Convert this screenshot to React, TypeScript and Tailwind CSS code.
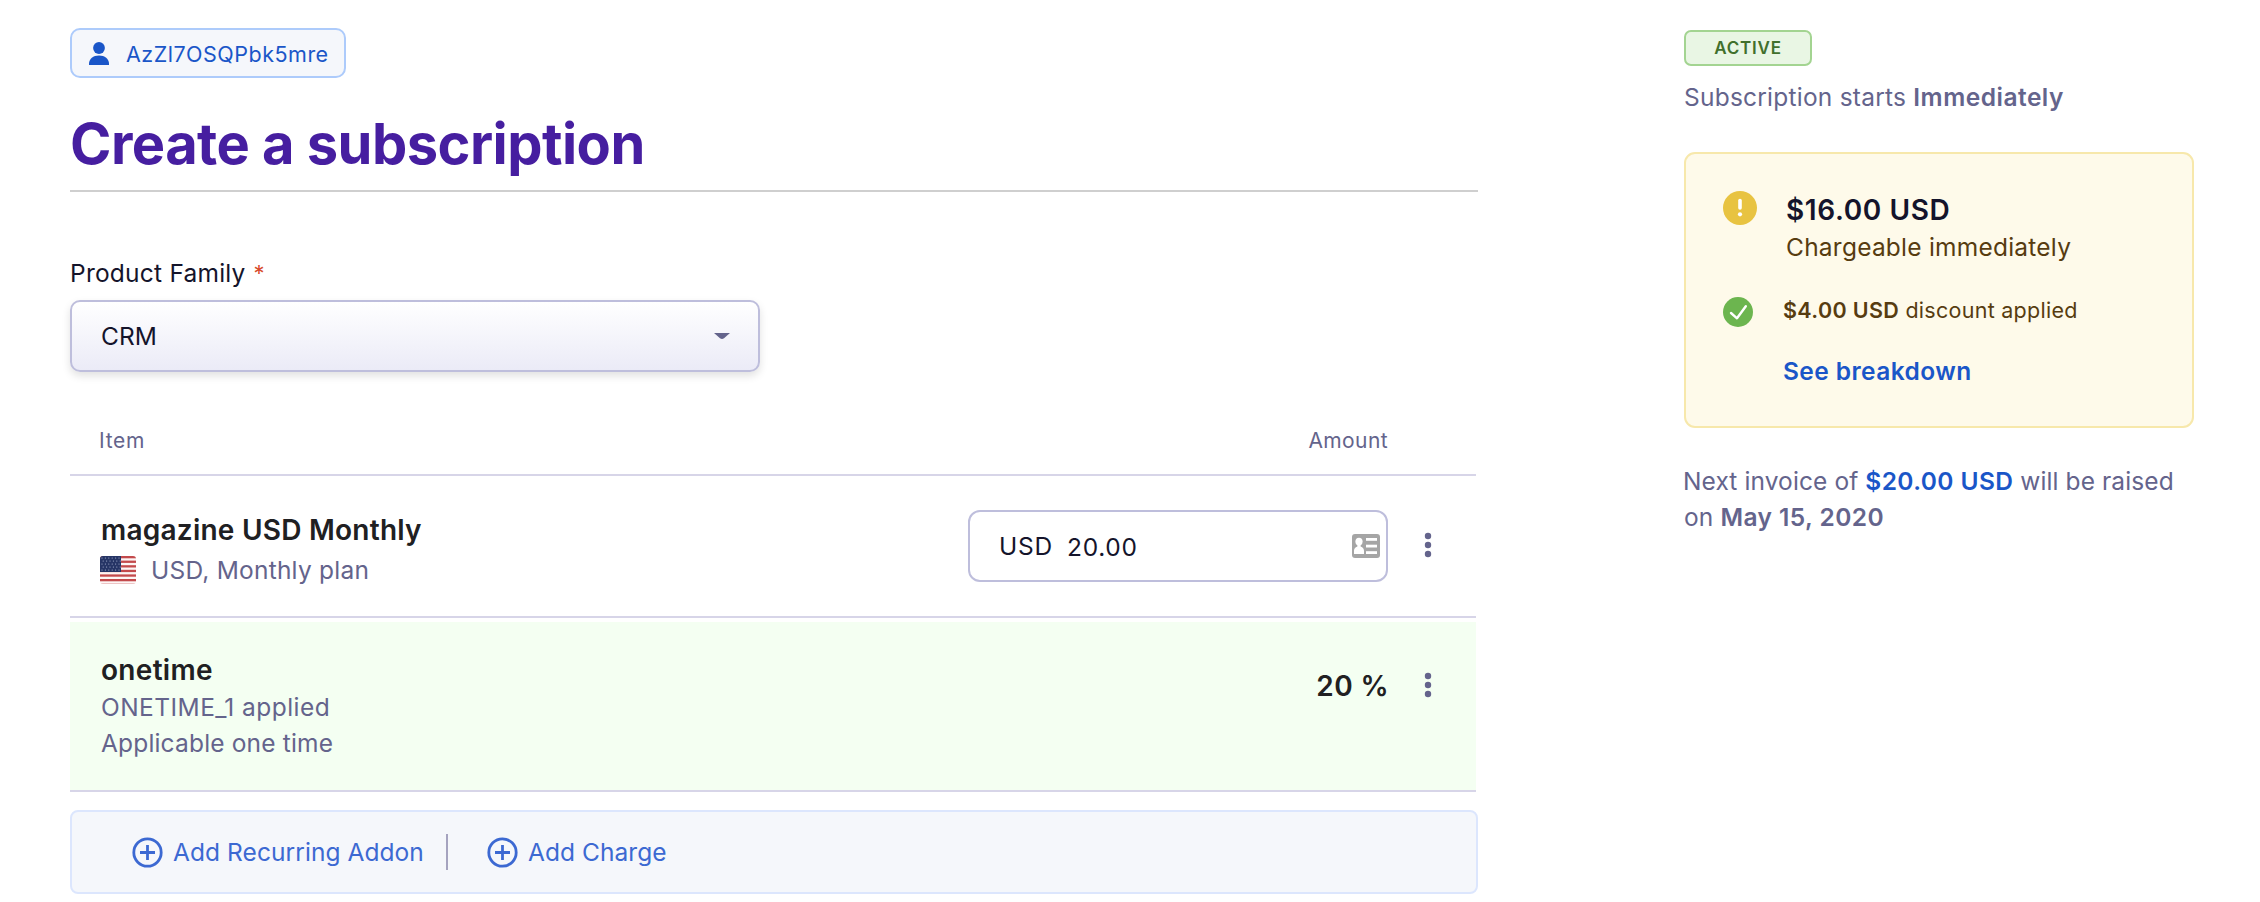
import { useState } from "react"

// 用户图标
function UserIcon() {
  return (
    <svg width="20" height="23" viewBox="0 0 20 23" fill="#1a56c8">
      <circle cx="10" cy="6" r="5.9" />
      <path d="M0 23v-1.2C0 16.6 4.2 13.4 10 13.4s10 3.2 10 8.4V23z" />
    </svg>
  )
}

// 美国国旗
function FlagIcon() {
  const stars = []
  for (let row = 0; row < 5; row++) {
    for (let col = 0; col < 6; col++) {
      stars.push(
        <circle key={`${row}-${col}`} cx={2 + col * 3.4 + (row % 2) * 1.2} cy={2 + row * 3} r="0.6" fill="#aab4d0" />
      )
    }
  }

  return (
    <svg width="36" height="28" viewBox="0 0 36 28">
      <clipPath id="flag">
        <rect width="36" height="28" rx="3" />
      </clipPath>
      <g clipPath="url(#flag)">
        <rect width="36" height="28" fill="#fdf6f5" />
        {[0, 4.6, 9.2, 13.8, 18.4, 23].map((y) => (
          <rect key={y} y={y} width="36" height="2.3" fill="#c34a4c" />
        ))}
        <rect y="27.2" width="36" height="0.8" fill="#e9b9ba" />
        <rect width="21" height="16" fill="#263566" />
        {stars}
      </g>
    </svg>
  )
}

function ContactCardIcon() {
  return (
    <svg width="28" height="24" viewBox="0 0 28 24">
      <rect width="28" height="24" rx="3" fill="#a5a5a5" />
      <g fill="#fff">
        <ellipse cx="7" cy="7.6" rx="3.6" ry="3.9" />
        <path d="M5.4 10h3.2v2.4c2.4.8 3.4 2.2 3.4 4.4V20H2v-3.2c0-2.2 1-3.6 3.4-4.4z" />
        <rect x="14" y="4" width="11" height="2.8" />
        <rect x="14" y="10.7" width="11" height="2.8" />
        <rect x="14" y="17.2" width="11" height="2.8" />
      </g>
    </svg>
  )
}

function MoreIcon() {
  return (
    <svg width="8" height="26" viewBox="0 0 8 26" fill="#64648c">
      <circle cx="4" cy="4" r="3.2" />
      <circle cx="4" cy="13" r="3.2" />
      <circle cx="4" cy="22" r="3.2" />
    </svg>
  )
}

function PlusIcon() {
  return (
    <svg width="31" height="31" viewBox="0 0 31 31" fill="none" stroke="#3c69d2" strokeWidth="2.8">
      <circle cx="15.5" cy="15.5" r="13.7" />
      <path d="M15.5 8v15M8 15.5h15" />
    </svg>
  )
}

function WarningIcon() {
  return (
    <svg width="34" height="34" viewBox="0 0 34 34">
      <circle cx="17" cy="17" r="17" fill="#e8c341" />
      <path d="M17 9.5v7.5" stroke="#fff" strokeWidth="3.6" strokeLinecap="round" />
      <circle cx="17" cy="23.3" r="2.1" fill="#fff" />
    </svg>
  )
}

function CheckIcon() {
  return (
    <svg width="30" height="30" viewBox="0 0 30 30">
      <circle cx="15" cy="15" r="15" fill="#6cb54f" />
      <path
        d="M8 16l6 5.3 8.8-12"
        fill="none"
        stroke="#fff"
        strokeWidth="2.4"
        strokeLinecap="round"
        strokeLinejoin="round"
      />
    </svg>
  )
}

export default function CreateSubscription() {
  const [amount, setAmount] = useState("20.00")

  const actions = ["Add Recurring Addon", "Add Charge"]

  return (
    <div className="flex h-[902px] w-[2260px] bg-white pl-[70px] font-['Inter','Liberation_Sans',sans-serif] text-[24.5px] leading-[36px] tracking-[0.23px] text-[#64648c]">
      <main className="w-[1408px] pt-7">
        <div className="flex h-[50px] w-[276px] items-center rounded-[10px] border-2 border-[#adcbfb] bg-[#f5f7fb] pl-[17px]">
          <UserIcon />
          <span className="pt-[2px] pl-[17px] text-[21.5px] tracking-[0.5px] text-[#1a56c8]">AzZl7OSQPbk5mre</span>
        </div>

        <h1 className="mt-[34px] border-b-2 border-[#cfcfcf] pb-[14px] text-[56px] leading-[64px] font-bold tracking-[-0.54px] text-[#461ea0]">
          Create a subscription
        </h1>

        {/* 产品系列 */}
        <label className="mt-[65px] flex h-8 items-center gap-[8px] text-[#14142b]">
          <span>Product Family</span>
          <span className="text-[22px] text-[#d8492a]">*</span>
        </label>
        <button
          type="button"
          className="mt-[11px] flex h-[72px] w-[690px] items-center justify-between rounded-[10px] border-2 border-[#bebedc] bg-linear-to-b from-white to-[#ebebf7] pr-[28px] pl-[29px] text-[#14142b] shadow-[0_4px_8px_rgba(0,0,0,0.12)]"
        >
          <span className="pb-px tracking-normal">CRM</span>
          <svg width="16" height="6" viewBox="0 0 16 6" fill="#64648c">
            <path d="M0 0h16L10 5.3q-2 1.4-4 0z" />
          </svg>
        </button>

        {/* 明细 */}
        <section className="w-[1406px]">
          <div className="mt-[55px] flex h-[49px] justify-between border-b-2 border-[#d7d5e8] pr-[88px] pl-[29px] text-[21px] leading-7">
            <span className="tracking-[0.7px]">Item</span>
            <span className="tracking-[0.4px]">Amount</span>
          </div>

          <div className="flex h-[142px] justify-between border-b-2 border-[#d7d5e8] pl-[30px]">
            <div className="pt-9">
              <div className="pl-px text-[28px] font-semibold tracking-[0.24px] text-[#202022]">magazine USD Monthly</div>
              <div className="mt-[3px] flex items-center gap-[15px] pt-px">
                <FlagIcon />
                <span>USD, Monthly plan</span>
              </div>
            </div>
            <div className="flex items-center pr-[44px]">
              <div className="flex h-[72px] w-[420px] items-center rounded-[12px] border-2 border-[#bebedc] pr-[6px] pl-[29px] text-[#14142b]">
                <span className="w-[68px] pb-px tracking-[0.8px]">USD</span>
                <input
                  value={amount}
                  onChange={(e) => setAmount(e.target.value)}
                  className="w-[200px] pt-[2px] tracking-[0.7px] outline-none"
                />
                <span className="ml-auto">
                  <ContactCardIcon />
                </span>
              </div>
              <span className="pb-[2px] pl-9">
                <MoreIcon />
              </span>
            </div>
          </div>

          <div className="mt-1 flex h-[170px] justify-between border-b-2 border-[#d7d5e8] bg-[#f4fff2] pr-[44px] pl-[31px]">
            <div className="pt-[30px]">
              <div className="mb-px text-[28px] font-semibold tracking-[0.3px] text-[#202022]">onetime</div>
              <div className="tracking-[0.45px]">ONETIME_1 applied</div>
              <div className="tracking-[0.17px]">Applicable one time</div>
            </div>
            <div className="flex items-start">
              <span className="pt-[46px] text-[28px] font-semibold tracking-[0.4px] text-[#202022]">20 %</span>
              <span className="pt-[50px] pl-[35px]">
                <MoreIcon />
              </span>
            </div>
          </div>
        </section>

        <div className="mt-[18px] flex h-[84px] items-center rounded-[8px] border-2 border-[#dce6fd] bg-[#f5f7fb] pl-[60px] text-[#3c69d2]">
          {actions.map((label, index) => (
            <div key={label} className="flex items-center">
              {index > 0 && <span className="mr-[39px] ml-[22px] h-9 w-[2px] bg-[#a5a3bf]" />}
              <button type="button" className="flex items-center gap-[10px] tracking-[0.07px]">
                <PlusIcon />
                <span className="pb-px">{label}</span>
              </button>
            </div>
          ))}
        </div>
      </main>

      {/* 右侧摘要 */}
      <aside className="ml-[206px] w-[510px] pt-[30px]">
        <div className="flex h-9 w-32 items-center justify-center rounded-[7px] border-2 border-[#a3d491] bg-[#e9f6e4] text-[17px] font-semibold tracking-[0.8px] text-[#41702c]">
          ACTIVE
        </div>
        <p className="mt-[13px]">
          Subscription starts <span className="font-semibold tracking-[0.5px]">Immediately</span>
        </p>

        <div className="mt-[37px] h-[276px] rounded-[11px] border-2 border-[#f7e8ab] bg-[#fefaea] pt-[37px] pl-[37px] text-[#573c10]">
          <div className="flex items-start gap-[29px]">
            <WarningIcon />
            <div className="pt-px">
              <div className="text-[28px] font-semibold tracking-[0.6px] text-[#14142b]">$16.00 USD</div>
              <div className="mt-px">Chargeable immediately</div>
            </div>
          </div>
          <div className="mt-8 flex h-[30px] items-center gap-[30px]">
            <CheckIcon />
            <p className="pb-1 text-[21.5px] tracking-[0.27px]">
              <span className="font-semibold tracking-[0.35px]">$4.00 USD</span> discount applied
            </p>
          </div>
          <a className="mt-[26px] block pl-[60px] font-semibold tracking-[0.42px] text-[#1a56c8]">See breakdown</a>
        </div>

        <p className="mt-[35px] -ml-px tracking-[0.1px]">
          Next invoice of <span className="font-semibold tracking-[0.4px] text-[#1a56c8]">$20.00 USD</span> will be raised
          <br />
          <span className="pl-px">on</span> <span className="font-semibold tracking-[0.45px]">May 15, 2020</span>
        </p>
      </aside>
    </div>
  )
}
